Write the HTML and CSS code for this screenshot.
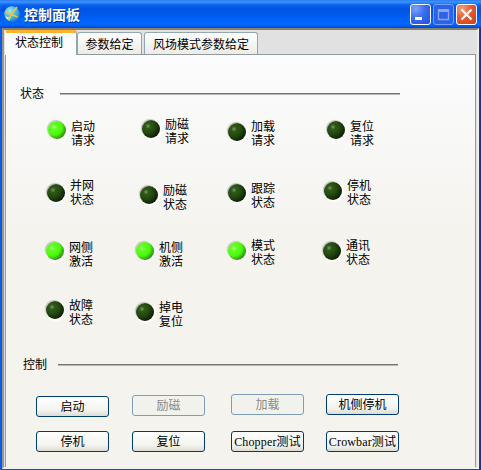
FILE: index.html
```html
<!DOCTYPE html>
<html lang="zh-CN">
<head>
<meta charset="utf-8">
<title>控制面板</title>
<link rel="stylesheet" href="styles.css">
</head>
<body>
<div class="window">
  <header class="titlebar">
    <svg class="app-icon" width="16" height="16" viewBox="0 0 16 16">
      <defs><radialGradient id="g" cx=".35" cy=".3" r=".8"><stop offset="0" stop-color="#a5e6f0"/><stop offset=".55" stop-color="#45b5d8"/><stop offset="1" stop-color="#1672bb"/></radialGradient></defs>
      <circle cx="8" cy="8" r="7.8" fill="url(#g)"/>
      <path d="M1 10Q4 12 7 10.5L5.500 14.500Q2 13 1 10Z" fill="#d6f3ef"/>
      <path d="M13 1L7.500 8.500L4 14M1.500 6L7.500 8.500L13.500 11" fill="none" stroke="#edc53e" stroke-width="1.5"/>
    </svg>
    <h1 class="title">控制面板</h1>
    <div class="win-buttons">
      <span class="win-btn"><svg width="21" height="21"><path d="M5 14.500h7" stroke="#fff" stroke-width="3"/></svg></span>
      <span class="win-btn dim"><svg width="21" height="21"><path d="M5.500 6v9.500h10V6" fill="none" stroke="#8ba4f4" stroke-width="1.3"/><path d="M5 6.500h11" stroke="#8ba4f4" stroke-width="3"/></svg></span>
      <span class="win-btn close"><svg width="21" height="21"><path d="M5.500 5.500l10 10M15.500 5.500l-10 10" stroke="#fff" stroke-width="2.200"/></svg></span>
    </div>
  </header>
  <main class="client">
    <nav class="tabs">
      <span class="tab active">状态控制</span>
      <span class="tab">参数给定</span>
      <span class="tab wide">风场模式参数给定</span>
    </nav>
    <section class="page">
      <div class="heading"><span>状态</span><i class="rule"></i></div>
      <div class="lamps">
        <div class="lamp r2 d2 up2"><i class="led on"></i><span>启动<br>请求</span></div>
        <div class="lamp r6 up1"><i class="led"></i><span>励磁<br>请求</span></div>
        <div class="lamp d2"><i class="led"></i><span>加载<br>请求</span></div>
        <div class="lamp r4 d2 up2"><i class="led"></i><span>复位<br>请求</span></div>
        <div class="lamp r1 down2"><i class="led"></i><span>并网<br>状态</span></div>
        <div class="lamp r4 d5 up1"><i class="led"></i><span>励磁<br>状态</span></div>
        <div class="lamp d3 up1"><i class="led"></i><span>跟踪<br>状态</span></div>
        <div class="lamp r1"><i class="led"></i><span>停机<br>状态</span></div>
        <div class="lamp d2 up2"><i class="led on"></i><span>网侧<br>激活</span></div>
        <div class="lamp d2 up2"><i class="led on"></i><span>机侧<br>激活</span></div>
        <div class="lamp"><i class="led on"></i><span>模式<br>状态</span></div>
        <div class="lamp"><i class="led"></i><span>通讯<br>状态</span></div>
        <div class="lamp up1"><i class="led"></i><span>故障<br>状态</span></div>
        <div class="lamp d2 up1"><i class="led"></i><span>掉电<br>复位</span></div>
      </div>
      <div class="heading control"><span>控制</span><i class="rule"></i></div>
      <div class="buttons">
        <button class="btn d2">启动</button>
        <button class="btn d1" disabled>励磁</button>
        <button class="btn" disabled>加载</button>
        <button class="btn">机侧停机</button>
        <button class="btn">停机</button>
        <button class="btn">复位</button>
        <button class="btn latin">Chopper测试</button>
        <button class="btn latin">Crowbar测试</button>
      </div>
    </section>
  </main>
</div>
</body>
</html>
```
FILE: styles.css
```css
* { box-sizing: border-box; }
body {
  margin: 0;
  font: 12px/14px "Liberation Serif", "Noto Sans CJK SC", sans-serif;
  color: #000;
}
.window {
  width: 481px;
  height: 470px;
  overflow: hidden;
  display: flex;
  flex-direction: column;
  background: linear-gradient(90deg, #0b5cf0, #0855dd 2px, #0855dd 478px, #0030b8);
  padding: 0 2px 1px;
}
.titlebar {
  height: 28px;
  flex: none;
  margin: 0 -2px;
  padding: 0 4px;
  display: flex;
  align-items: center;
  background: linear-gradient(#2a7df0 0, #3c93ff 2px, #0a62ee 5px, #0054e3 9px, #0058ea 14px, #0066ff 22px, #0066ff 25px, #0045cc 28px);
}
.app-icon { margin-right: 4px; }
.title {
  margin: 0;
  flex: 1;
  font: bold 14px/20px "Noto Sans CJK SC", sans-serif;
  color: #fff;
  text-shadow: 1px 1px 0 #0a2f94;
}
.win-buttons { display: flex; gap: 2px; padding-top: 1px; }
.win-btn {
  width: 21px;
  height: 21px;
  border: 1px solid #fff;
  border-radius: 3px;
  background: radial-gradient(circle at 25% 20%, #7ba2f7, #3a6cf0 45%, #1f50dc);
}
.win-btn svg { display: block; margin: -1px; }
.win-btn.dim { background: #2c62ea; border-color: #7b9cf5; }
.win-btn.close { background: radial-gradient(circle at 25% 20%, #f3a083, #e35b37 45%, #cc3f16); }
.client {
  flex: 1;
  display: flex;
  flex-direction: column;
  border-top: 2px solid #85816f;
  border-left: 2px solid #99958a;
  border-right: 2px solid #f2efdf;
  border-bottom: 2px solid #f4f2e8;
  background: #e1e1e1;
  padding: 0 1px;
}
.tabs { height: 24px; flex: none; display: flex; align-items: flex-end; }
.tab {
  width: 65px;
  height: 22px;
  margin-right: 2px;
  padding-top: 5px;
  text-align: center;
  border: 1px solid #91a7b4;
  border-bottom: 0;
  border-radius: 3px 3px 0 0;
  background: linear-gradient(#fff, #ecebe6);
}
.tab.active {
  position: relative;
  z-index: 1;
  width: 72px;
  height: 25px;
  margin: 0 0 -1px;
  padding: 3px 4px 0 0;
  border-top: 3px solid #ffb32c;
  border-left-color: #fff;
  background: #fcfcfe;
}
.tab.wide { width: 114px; }
.page {
  flex: 1;
  border: 1px solid #919b9c;
  border-bottom: 0;
  background: linear-gradient(#fcfcfe, #f4f3ee 45%, #f4f3ee);
}
.heading { display: flex; align-items: center; padding: 32px 0 0 14px; height: 46px; }
.rule {
  width: 340px;
  height: 2px;
  margin-left: 16px;
  border-top: 1px solid #77756f;
  border-bottom: 1px solid #b9b7b3;
}
.lamps {
  display: grid;
  grid-template-columns: 90px 92px 95px 70px;
  grid-template-rows: 61px 60px 60px 56px;
  margin: 17px 0 0 37px;
}
.lamp { display: flex; align-items: flex-start; }
.led {
  width: 18px;
  height: 18px;
  margin: 3px 5px 0 3px;
  border-radius: 50%;
  background: radial-gradient(circle at 6px 6px, #7c9a70 0, #2f5a18 2.5px, #234810 7px, #102405 12px);
  box-shadow: -1px -1px 1px #bdbdb9, 1px 1px 2px 1px #fff;
}
.led.on { background: radial-gradient(circle at 6px 6px, #b1ff83 0, #5dff1d 3px, #4cf80d 8px, #319c0d 12px); }
.r1 { margin-left: 1px; }
.r2 { margin-left: 2px; }
.r4 { margin-left: 4px; }
.r6 { margin-left: 6px; }
.d1 { margin-top: 1px; }
.d2 { margin-top: 2px; }
.d3 { margin-top: 3px; }
.d5 { margin-top: 5px; }
.up1 .led { margin-top: 2px; }
.up2 .led { margin-top: 1px; }
.down2 .led { margin-top: 5px; }
.heading.control { height: 14px; margin-top: 3px; padding: 0 0 0 17px; }
.heading.control .rule { margin-left: 11px; }
.buttons {
  display: grid;
  grid-template-columns: 96px 99px 95px 73px;
  grid-template-rows: 37px 21px;
  margin: 22px 0 0 30px;
}
.btn {
  width: 73px;
  height: 21px;
  padding: 1px 0 0;
  font: inherit;
  color: #000;
  white-space: nowrap;
  border: 1px solid #003c74;
  border-radius: 3px;
  background: linear-gradient(#fff, #f3f3ef 70%, #dedbd0);
}
.btn.latin { letter-spacing: .15px; }
.btn:disabled { color: #8b8b85; border-color: #7f9db9; background: #f2f2ec; }
```
